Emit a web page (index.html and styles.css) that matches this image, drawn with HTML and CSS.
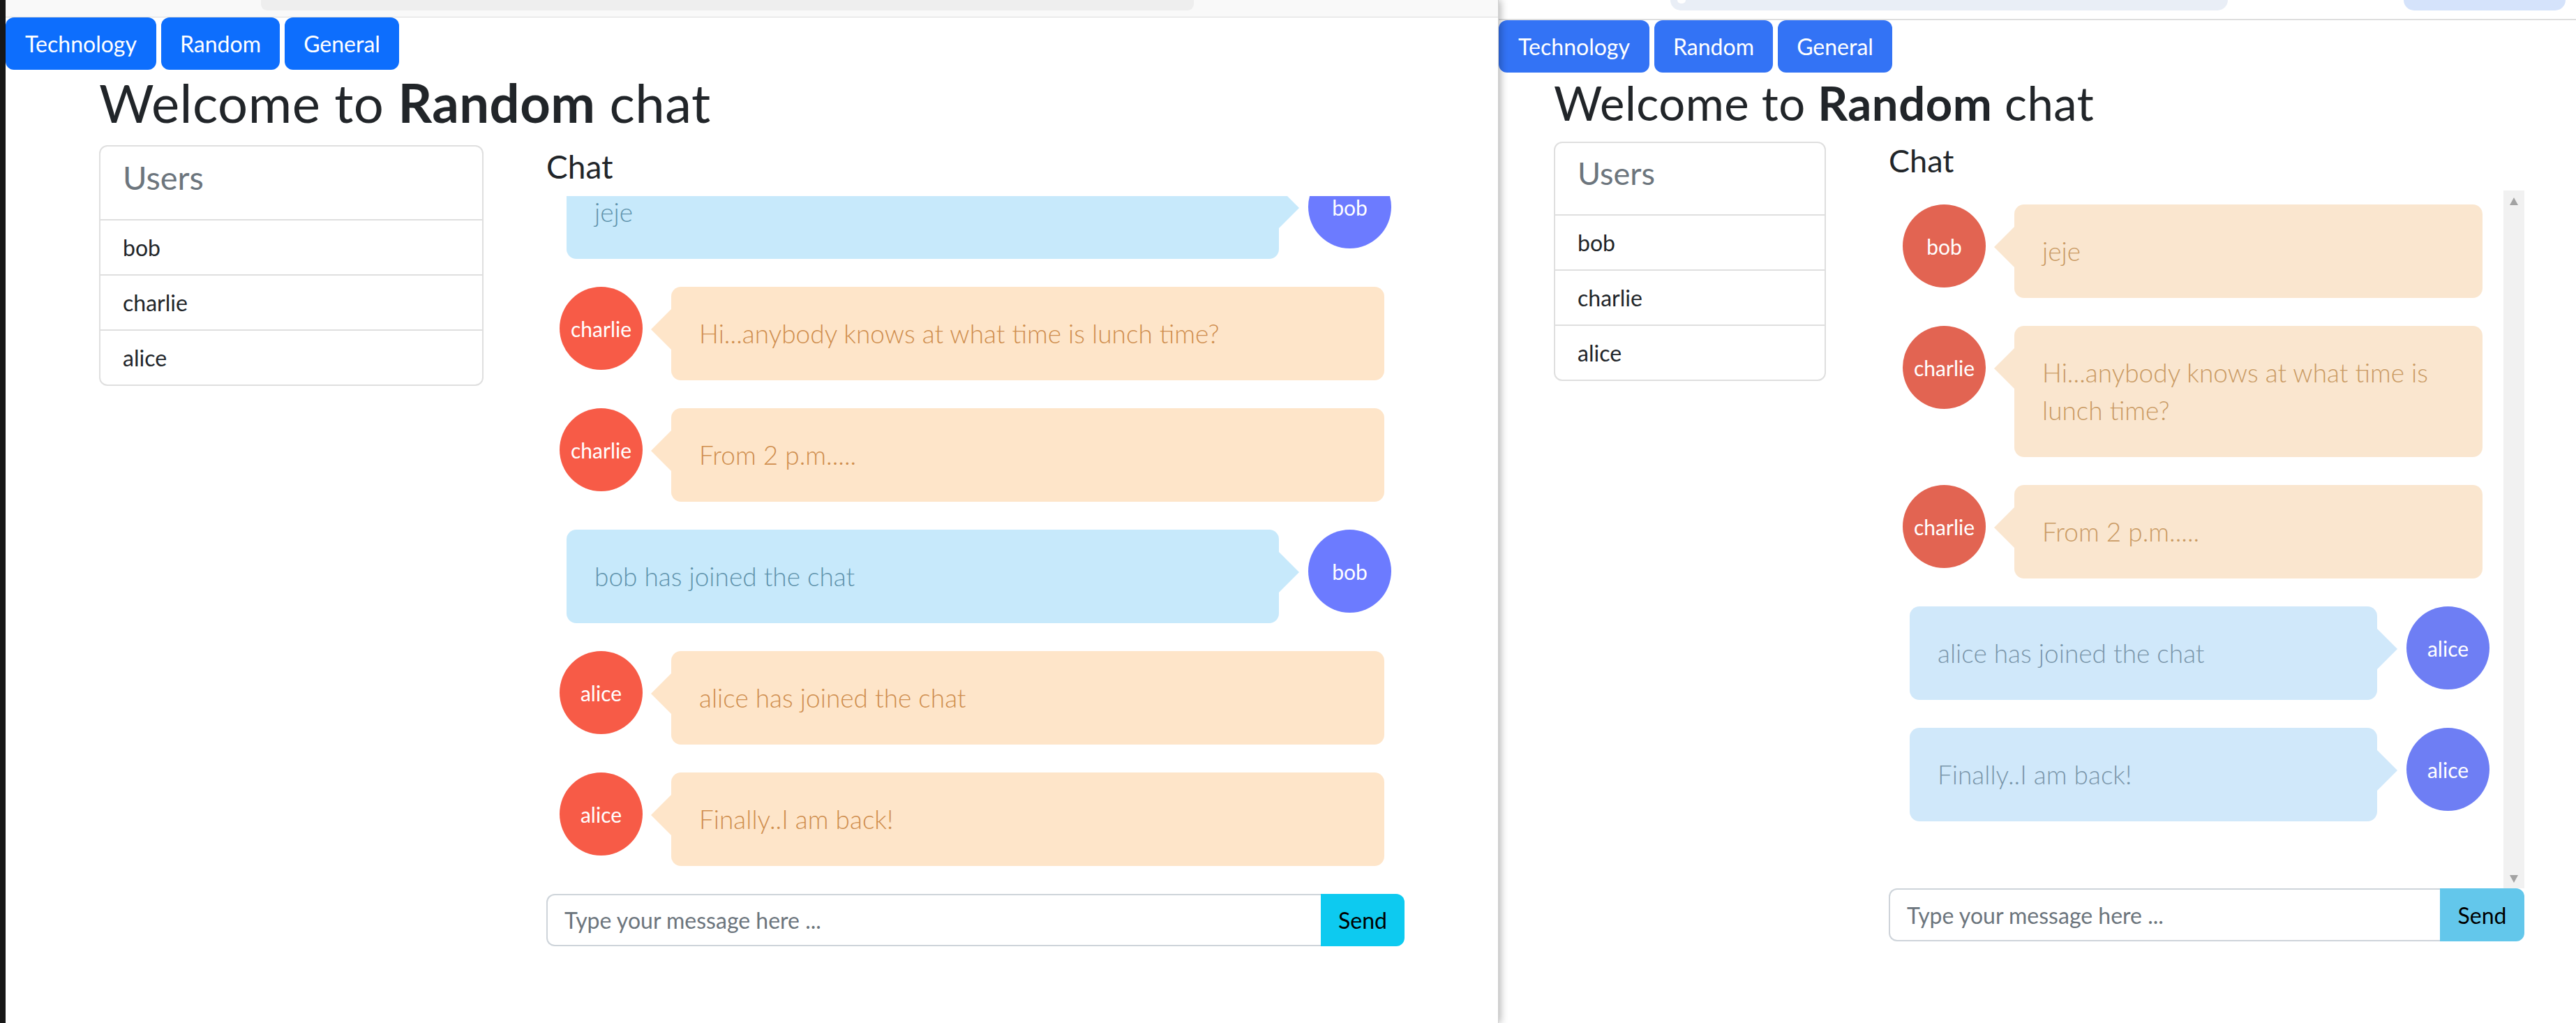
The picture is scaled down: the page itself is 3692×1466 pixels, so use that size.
FILE: index.html
```html
<!DOCTYPE html>
<html lang="en">
<head>
<meta charset="utf-8">
<title>Random chat</title>
<link rel="stylesheet" href="styles.css">
</head>
<body>
<div class="screen">
  <div class="desk"></div>

  <div class="win win-a">
    <div class="chrome chrome-a"><div class="addr-a"></div></div>
    <div class="view">
      <nav class="rooms">
        <button class="room room-tech">Technology</button>
        <button class="room room-rand">Random</button>
        <button class="room room-gen">General</button>
      </nav>
      <div class="main">
        <h1 class="title">Welcome to <b>Random</b> chat</h1>
        <div class="row">
          <div class="users">
            <div class="users-head"><h4 class="users-title">Users</h4></div>
            <div class="user">bob</div>
            <div class="user">charlie</div>
            <div class="user">alice</div>
          </div>
          <div class="chat">
            <h4 class="chat-title">Chat</h4>
            <div class="msgs">
              <div class="msgs-inner scrolled">
                <div class="msg mine"><div class="avatar">bob</div><div class="bubble">jeje</div></div>
                <div class="msg other"><div class="avatar">charlie</div><div class="bubble">Hi...anybody knows at what time is lunch time?</div></div>
                <div class="msg other"><div class="avatar">charlie</div><div class="bubble">From 2 p.m.....</div></div>
                <div class="msg mine"><div class="avatar">bob</div><div class="bubble">bob has joined the chat</div></div>
                <div class="msg other"><div class="avatar">alice</div><div class="bubble">alice has joined the chat</div></div>
                <div class="msg other"><div class="avatar">alice</div><div class="bubble">Finally..I am back!</div></div>
              </div>
            </div>
            <div class="compose">
              <input class="compose-input" type="text" placeholder="Type your message here ...">
              <button class="send">Send</button>
            </div>
          </div>
        </div>
      </div>
    </div>
  </div>

  <div class="win win-b">
    <div class="chrome chrome-b"><div class="pill pill-1"><span class="pill-dot"></span></div><div class="pill pill-2"></div></div>
    <div class="view">
      <nav class="rooms">
        <button class="room room-tech">Technology</button>
        <button class="room room-rand">Random</button>
        <button class="room room-gen">General</button>
      </nav>
      <div class="main">
        <h1 class="title">Welcome to <b>Random</b> chat</h1>
        <div class="row">
          <div class="users">
            <div class="users-head"><h4 class="users-title">Users</h4></div>
            <div class="user">bob</div>
            <div class="user">charlie</div>
            <div class="user">alice</div>
          </div>
          <div class="chat">
            <h4 class="chat-title">Chat</h4>
            <div class="msgs">
              <div class="msgs-inner">
                <div class="msg other"><div class="avatar">bob</div><div class="bubble">jeje</div></div>
                <div class="msg other"><div class="avatar">charlie</div><div class="bubble">Hi...anybody knows at what time is lunch time?</div></div>
                <div class="msg other"><div class="avatar">charlie</div><div class="bubble">From 2 p.m.....</div></div>
                <div class="msg mine"><div class="avatar">alice</div><div class="bubble">alice has joined the chat</div></div>
                <div class="msg mine"><div class="avatar">alice</div><div class="bubble">Finally..I am back!</div></div>
              </div>
              <div class="scrollbar"><span class="arrow-up"></span><span class="arrow-down"></span></div>
            </div>
            <div class="compose">
              <input class="compose-input" type="text" placeholder="Type your message here ...">
              <button class="send">Send</button>
            </div>
          </div>
        </div>
      </div>
    </div>
  </div>
</div>
</body>
</html>
```

FILE: styles.css
```css
* { box-sizing: border-box; }

html, body {
  margin: 0;
  padding: 0;
}

body {
  width: 3692px;
  height: 1466px;
  overflow: hidden;
  background: #ffffff;
  color: #212529;
  font-family: Lato, "Open Sans", "DejaVu Sans", sans-serif;
}

.screen {
  display: flex;
  height: 1466px;
}

.desk {
  flex: none;
  width: 8px;
  background: #181818;
}

.win {
  flex: none;
  display: flex;
  flex-direction: column;
  height: 1466px;
  background: #ffffff;
}

/* ---------- window A (left) ---------- */
.win-a {
  width: 2140px;
  position: relative;
  z-index: 1;
  border-right: 1px solid #cfcfcf;
  box-shadow: 3px 0 10px rgba(0, 0, 0, 0.28);
  --btn: #0d6efd;
  --mt: 2px;
  --h1: 76px;
  --h1lh: 91px;
  --h4: 47px;
  --h4lh: 56px;
  --ch: 46px;
  --chlh: 55px;
  --ctm: 3px;
  --ctb: 15px;
  --cx: 134px;
  --cardw: 551px;
  --chatw: 1230px;
  --pad: 19px;
  --orange: #fee5c9;
  --orange-text: #cf8e4e;
  --blue: #c7e9fb;
  --blue-text: #5f93ac;
  --red: #f75b47;
  --violet: #6c7bff;
  --send: #0dcaf0;
  --compose-h: 75px;
  --sendw: 120px;
}

/* ---------- window B (right) ---------- */
.win-b {
  width: 1544px;
  --btn: #3373f5;
  --mt: 3px;
  --h1: 67px;
  --h1lh: 80px;
  --h4: 45px;
  --h4lh: 54px;
  --ch: 45px;
  --chlh: 54px;
  --ctm: 0px;
  --ctb: 16px;
  --cx: 79px;
  --cardw: 390px;
  --chatw: 911px;
  --pad: 20px;
  --orange: #fae6cf;
  --orange-text: #c99a63;
  --blue: #d0e8fa;
  --blue-text: #7a96aa;
  --red: #e26452;
  --violet: #6e7ef4;
  --send: #63c7eb;
  --compose-h: 76px;
  --sendw: 121px;
}

/* ---------- browser chrome ---------- */
.chrome-a {
  flex: none;
  height: 25px;
  background: #f9f9f9;
  border-bottom: 1px solid #dcdcdc;
}

.addr-a {
  margin-left: 366px;
  width: 1337px;
  height: 15px;
  background: #eeeeee;
  border-radius: 0 0 9px 9px;
}

.chrome-b {
  flex: none;
  display: flex;
  height: 29px;
  background: #ffffff;
  border-bottom: 2px solid #dedede;
}

.pill {
  height: 15px;
  border-radius: 0 0 16px 16px;
}

.pill-1 {
  margin-left: 246px;
  width: 799px;
  background: #e9eef6;
  padding-left: 10px;
}

.pill-dot {
  display: block;
  width: 12px;
  height: 5px;
  background: #ffffff;
  border-radius: 0 0 6px 6px;
}

.pill-2 {
  margin-left: 252px;
  width: 232px;
  background: #d5e3fb;
}

/* ---------- page ---------- */
.view {
  flex: 1;
}

.rooms {
  display: flex;
  gap: 7px;
}

.room {
  height: 75px;
  padding: 0;
  border: 0;
  border-radius: 12px;
  background: var(--btn);
  color: #ffffff;
  font-family: Lato, "Open Sans", sans-serif;
  font-size: 32px;
  line-height: 48px;
  text-align: center;
}

.room-tech { width: 216px; }
.room-rand { width: 170px; }
.room-gen { width: 164px; }

.main {
  margin-left: var(--cx);
  padding-top: var(--mt);
}

.win-a .main {
  padding-top: 1px;
}

.title {
  margin: 0 0 16px;
  font-size: var(--h1);
  line-height: var(--h1lh);
  font-weight: 400;
  letter-spacing: 0.5px;
}

.title b {
  font-weight: 700;
}

.row {
  display: flex;
  align-items: flex-start;
  gap: 90px;
}

/* ---------- users card ---------- */
.users {
  flex: none;
  width: var(--cardw);
  border: 2px solid #dfdfdf;
  border-radius: 12px;
}

.users-head {
  padding: 16px 32px;
  border-bottom: 2px solid #dfdfdf;
}

.users-title {
  margin: 0 0 16px;
  font-size: var(--h4);
  line-height: var(--h4lh);
  font-weight: 400;
  color: #6c757d;
}

.user {
  padding: 15px 32px;
  font-size: 32px;
  line-height: 47px;
  border-bottom: 2px solid #dfdfdf;
}

.user:last-child {
  border-bottom: 0;
}

/* ---------- chat ---------- */
.chat {
  flex: none;
  width: var(--chatw);
}

.chat-title {
  margin: var(--ctm) 0 var(--ctb);
  font-size: var(--ch);
  line-height: var(--chlh);
  font-weight: 400;
}

.msgs {
  display: flex;
  align-items: flex-start;
  height: 1000px;
  overflow: hidden;
}

.msgs-inner {
  flex: 1;
  padding: 20px var(--pad);
}

.msgs-inner.scrolled {
  margin-top: -64px;
}

.msg {
  display: flex;
  align-items: flex-start;
}

.msg + .msg {
  margin-top: 40px;
}

.msg.mine {
  flex-direction: row-reverse;
}

.avatar {
  flex: none;
  display: flex;
  align-items: center;
  justify-content: center;
  width: 119px;
  height: 119px;
  border-radius: 50%;
  color: #ffffff;
  font-size: 30px;
  line-height: 34px;
}

.other .avatar { background: var(--red); }
.mine .avatar { background: var(--violet); }

.bubble {
  flex: 1;
  position: relative;
  min-height: 134px;
  padding: 40px 40px;
  border-radius: 14px;
  font-size: 37px;
  line-height: 54px;
  font-weight: 300;
}

.other .bubble {
  margin: 0 10px 0 41px;
  background: var(--orange);
  color: var(--orange-text);
}

.mine .bubble {
  margin: 0 42px 0 10px;
  background: var(--blue);
  color: var(--blue-text);
}

.bubble::before {
  content: "";
  position: absolute;
  top: 31px;
  width: 0;
  height: 0;
  border-top: 30px solid transparent;
  border-bottom: 30px solid transparent;
}

.other .bubble::before {
  left: -29px;
  border-right: 30px solid var(--orange);
}

.mine .bubble::before {
  right: -29px;
  border-left: 30px solid var(--blue);
}

/* fake scrollbar in window B */
.scrollbar {
  flex: none;
  display: flex;
  flex-direction: column;
  justify-content: space-between;
  align-items: center;
  width: 30px;
  height: 1000px;
  padding: 10px 0 8px;
  background: #f1f1f1;
}

.arrow-up {
  width: 0;
  height: 0;
  border-left: 6px solid transparent;
  border-right: 6px solid transparent;
  border-bottom: 11px solid #a3a3a3;
}

.arrow-down {
  width: 0;
  height: 0;
  border-left: 6px solid transparent;
  border-right: 6px solid transparent;
  border-top: 11px solid #a3a3a3;
}

/* ---------- compose ---------- */
.compose {
  display: flex;
  height: var(--compose-h);
}

.compose-input {
  flex: 1;
  min-width: 0;
  height: 100%;
  margin: 0;
  padding: 0 24px;
  border: 2px solid #ced4da;
  border-right: 0;
  border-radius: 12px 0 0 12px;
  background: #ffffff;
  color: #212529;
  font-family: Lato, "Open Sans", sans-serif;
  font-size: 32px;
  outline: none;
}

.compose-input::placeholder {
  color: #6c757d;
  opacity: 1;
}

.send {
  flex: none;
  width: var(--sendw);
  height: 100%;
  margin: 0;
  padding: 0;
  border: 0;
  border-radius: 0 12px 12px 0;
  background: var(--send);
  color: #000000;
  font-family: Lato, "Open Sans", sans-serif;
  font-size: 32px;
}
```
